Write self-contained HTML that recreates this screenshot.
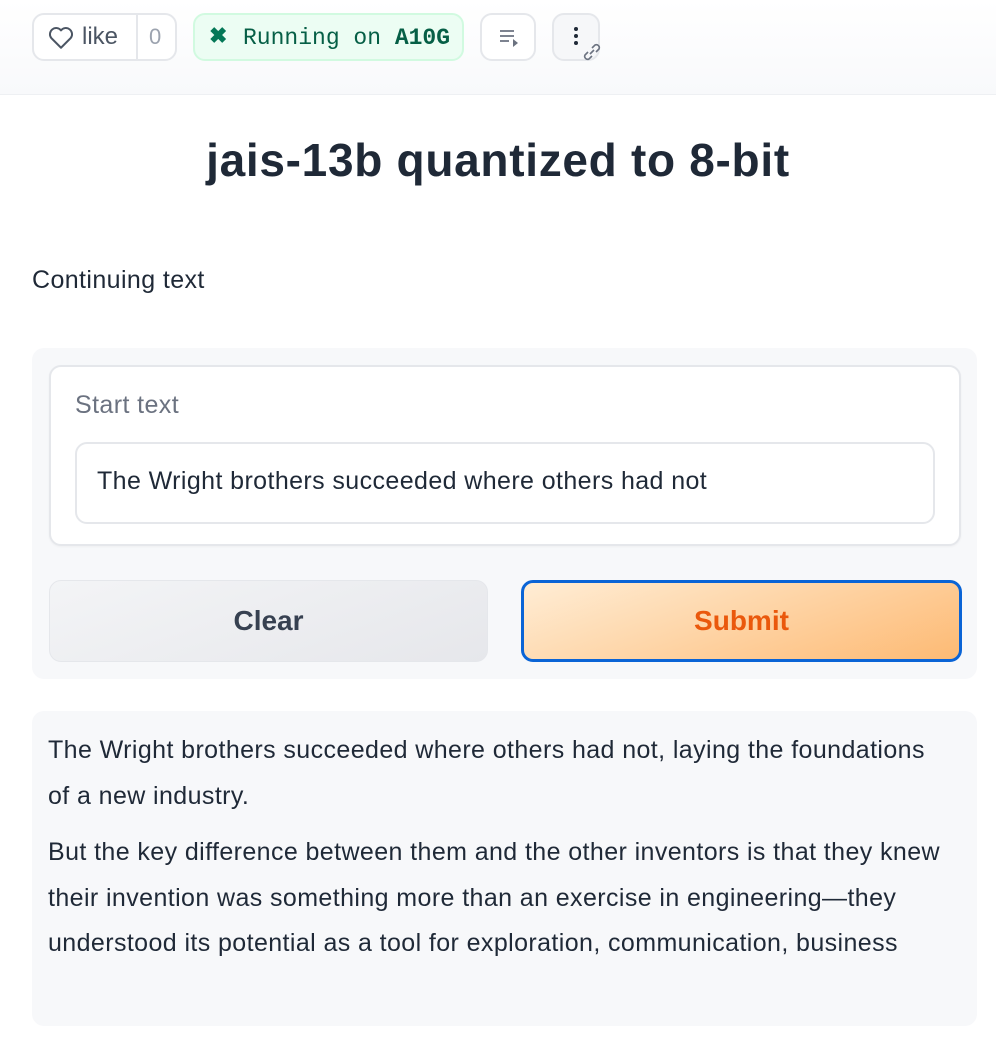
<!DOCTYPE html>
<html><head><meta charset="utf-8"><style>
*{box-sizing:border-box;margin:0;padding:0}
body{width:996px;height:1040px;background:#fff;font-family:"Liberation Sans",sans-serif;color:#1f2937;position:relative;overflow:hidden}
.hdr{position:absolute;left:0;top:0;width:996px;height:95px;background:linear-gradient(#fff,#f8f9fb);border-bottom:1px solid #eef0f3}
.abs{position:absolute}
.pill{position:absolute;top:13px;height:48px;border:2px solid #e5e7eb;border-radius:12px;background:#fff}
h1{position:absolute;left:0;width:996px;top:133px;text-align:center;font-size:46px;font-weight:bold;color:#1f2937;letter-spacing:0.7px}
.t{font-size:25px;letter-spacing:0.4px;white-space:nowrap}
</style></head><body>
<div class="hdr"></div>
<div class="pill" style="left:32px;width:145px;">
  <svg class="abs" style="left:14px;top:11px" width="26" height="24" viewBox="0 0 24 22"><path d="M12 20 L3 11 A5 5 0 0 1 12 4 A5 5 0 0 1 21 11 Z" fill="none" stroke="#4b5563" stroke-width="1.8" stroke-linejoin="round"/></svg>
  <span class="abs" style="left:48px;top:8px;font-size:24px;color:#4b5563">like</span>
  <div class="abs" style="left:102px;top:0;width:2px;height:44px;background:#e5e7eb"></div>
  <span class="abs" style="left:115px;top:9px;font-size:22px;color:#9ca3af">0</span>
</div>
<div class="pill" style="left:193px;width:271px;background:#ecfdf3;border-color:#d1fae0">
  <span class="abs" style="left:14px;top:8px;font-size:22px;color:#047857;font-weight:bold">✖</span>
  <span class="abs" style="left:48px;top:10px;font-family:'Liberation Mono',monospace;font-size:23px;color:#065f46">Running on <b>A10G</b></span>
</div>
<div class="pill" style="left:480px;width:56px;">
  <svg class="abs" style="left:16px;top:13px" width="22" height="20"><path d="M2 3h14M2 8h14M2 13h9" stroke="#6b7280" stroke-width="1.8"/><path d="M15 11l5 4-5 4z" fill="#6b7280"/></svg>
</div>
<div class="pill" style="left:552px;width:48px;background:#f6f7f9">
  <div class="abs" style="left:20px;top:12px;width:4px;height:4px;border-radius:2px;background:#1f2937;box-shadow:0 7px 0 #1f2937,0 14px 0 #1f2937"></div>
  <svg class="abs" style="left:27px;top:26px" width="22" height="22" viewBox="0 0 22 22"><path d="M9 13l4-4M7 11l-3 3a3 3 0 0 0 4 4l3-3M15 11l3-3a3 3 0 0 0-4-4l-3 3" fill="none" stroke="#6b7280" stroke-width="1.6"/></svg>
</div>
<h1>jais-13b quantized to 8-bit</h1>
<div class="abs t" style="left:32px;top:266px;color:#1f2937">Continuing text</div>
<div class="abs" style="left:32px;top:348px;width:945px;height:331px;background:#f7f8fa;border-radius:12px"></div>
<div class="abs" style="left:49px;top:365px;width:912px;height:181px;background:#fff;border:2px solid #e5e7eb;border-radius:12px;box-shadow:0 1px 2px rgba(0,0,0,.04)"></div>
<div class="abs t" style="left:75px;top:391px;color:#6b7280">Start text</div>
<div class="abs" style="left:75px;top:442px;width:860px;height:82px;border:2px solid #e5e7eb;border-radius:12px;background:#fff"></div>
<div class="abs t" style="left:97px;top:467px;color:#1f2937">The Wright brothers succeeded where others had not</div>
<div class="abs" style="left:49px;top:580px;width:439px;height:82px;border-radius:12px;background:linear-gradient(160deg,#f3f4f6,#e6e7eb);border:1px solid #e5e7eb;text-align:center;line-height:80px;font-size:28px;font-weight:bold;color:#374151">Clear</div>
<div class="abs" style="left:521px;top:580px;width:441px;height:82px;border-radius:12px;background:linear-gradient(160deg,#ffedd5,#fdba74);border:3px solid #0a64d6;text-align:center;line-height:76px;font-size:28px;font-weight:bold;color:#ea580c">Submit</div>
<div class="abs" style="left:32px;top:711px;width:945px;height:315px;background:#f7f8fa;border-radius:12px"></div>
<div class="abs t" style="left:48px;top:727px;width:920px;line-height:46px;color:#1f2937">The Wright brothers succeeded where others had not, laying the foundations<br>of a new industry.</div>
<div class="abs t" style="left:48px;top:830px;width:925px;line-height:45.5px;color:#1f2937">But the key difference between them and the other inventors is that they knew<br>their invention was something more than an exercise in engineering—they<br>understood its potential as a tool for exploration, communication, business</div>
</body></html>
